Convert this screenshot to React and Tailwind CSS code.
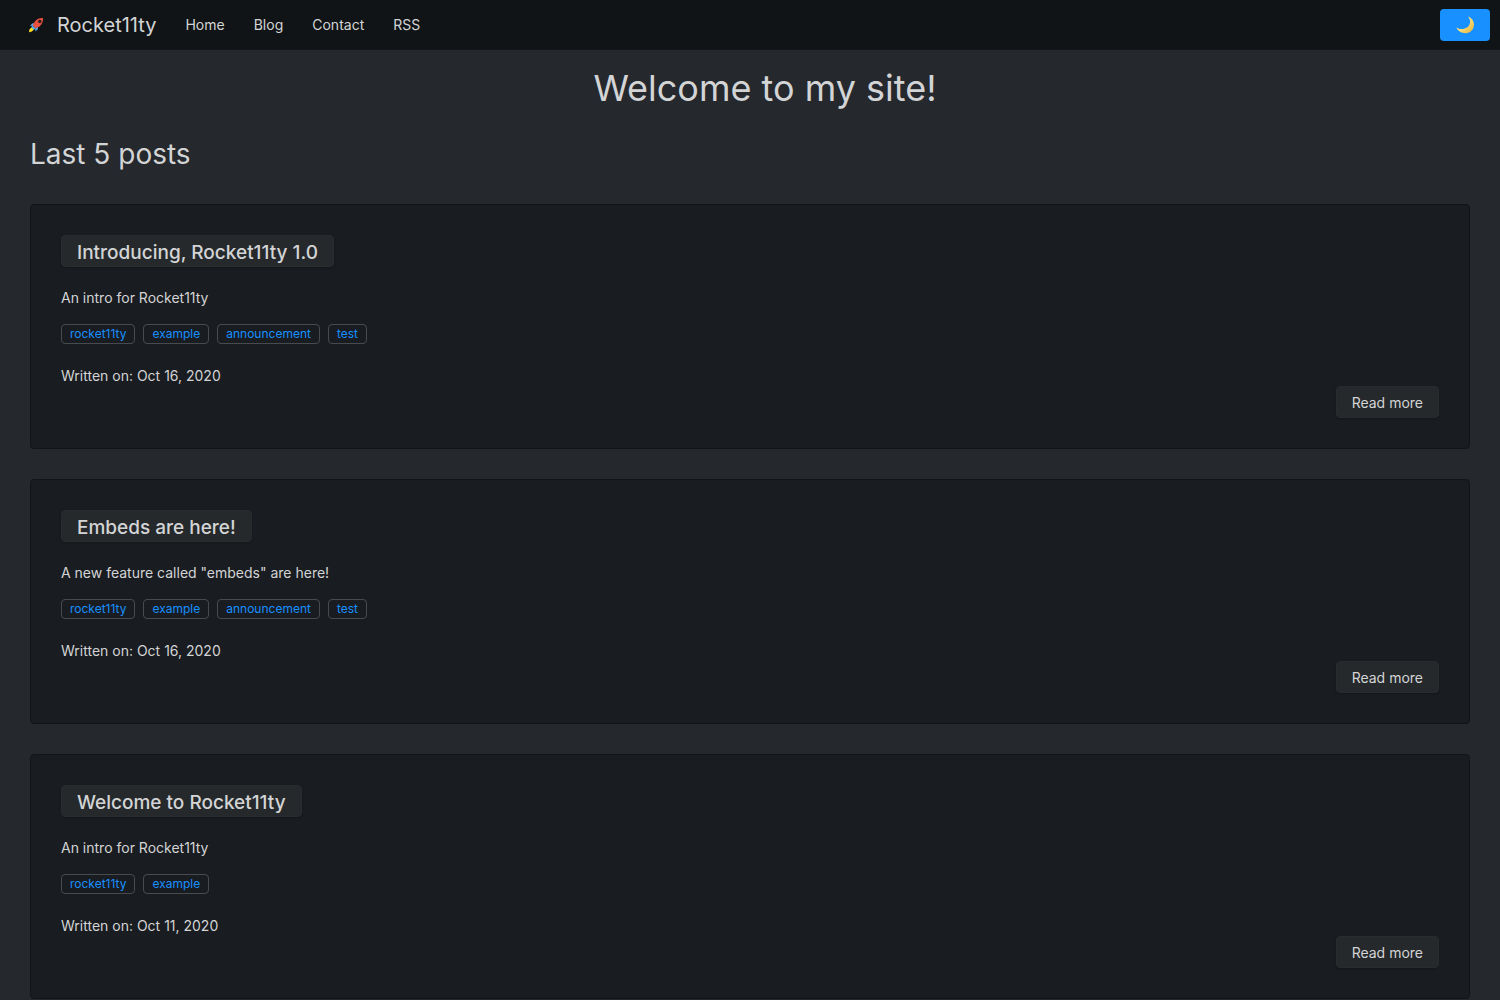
const navLinks = ['Home', 'Blog', 'Contact', 'RSS'];

const posts = [
  {
    title: 'Introducing, Rocket11ty 1.0',
    text: 'An intro for Rocket11ty',
    tags: ['rocket11ty', 'example', 'announcement', 'test'],
    date: 'Oct 16, 2020',
  },
  {
    title: 'Embeds are here!',
    text: 'A new feature called "embeds" are here!',
    tags: ['rocket11ty', 'example', 'announcement', 'test'],
    date: 'Oct 16, 2020',
  },
  {
    title: 'Welcome to Rocket11ty',
    text: 'An intro for Rocket11ty',
    tags: ['rocket11ty', 'example'],
    date: 'Oct 11, 2020',
  },
];

function Rocket() {
  return (
    <svg viewBox="0 0 16 16" className="size-4" aria-hidden="true">
      <path d="M6.6 6 4.2 6.6 2 9l3.2-.2zM10 9.4 9.8 12.2 7.4 14.6 7.2 11.2z" fill="#55acee" />
      <path d="M3.6 10.2 1.4 12.4 1 15.2l2.8-.6 2.2-2.1z" fill="#ffe21c" />
      <path d="M15 1c-3.2-.2-6.2.8-8.2 3.4L4.6 8.6l2.9 2.9 4.2-2.3C14.2 7.2 15.2 4.2 15 1z" fill="#e8503f" />
      <path d="m4.6 8.6-1.3 1.6 2.6 2.6 1.6-1.3z" fill="#55acee" />
      <circle cx="11.8" cy="4.4" r="1.7" fill="#24201f" />
    </svg>
  );
}

function Moon() {
  return (
    <svg viewBox="0 0 20 20" className="size-5" aria-hidden="true">
      <defs>
        <linearGradient id="moon" x1="0" y1="0" x2="1" y2="1">
          <stop offset="0.4" stopColor="#ffe680" />
          <stop offset="1" stopColor="#dfb03a" />
        </linearGradient>
      </defs>
      <path
        d="M13.2 1.4c4.6 2 6.8 6.3 5.4 10.8-1.4 4.4-5.6 6.5-9.7 5.9-3.5-.6-6.4-2.8-7.6-5.9 2.4 1.9 5.4 2.4 8.4 1.4 5.4-1.8 7.2-7.2 3.5-12.2z"
        fill="url(#moon)"
      />
    </svg>
  );
}

const raised = 'rounded border border-[#282c2e] bg-[#25292b] px-[15px] shadow-[0_1px_2px_rgba(0,0,0,0.2)]';

function Post({ post }) {
  return (
    <article className="rounded border border-[#121517] bg-[#191c20] p-[30px]">
      <h3 className="flex">
        <a href="#" className={`flex h-8 items-center pt-0.5 text-[19px] font-medium ${raised}`}>
          {post.title}
        </a>
      </h3>
      <p className="mt-5">{post.text}</p>
      <div className="mt-4 flex flex-wrap gap-2">
        {post.tags.map((tag) => (
          <a
            key={tag}
            href="#"
            className="flex h-5 items-center rounded border border-[#484b4e] px-2 text-xs text-[#1890ff]"
          >
            {tag}
          </a>
        ))}
      </div>
      <p className="mt-[21px]">Written on: {post.date}</p>
      <div className="flex justify-end">
        <a href="#" className={`flex h-8 items-center ${raised}`}>
          Read more
        </a>
      </div>
    </article>
  );
}

export default function App() {
  return (
    <div className="min-h-screen bg-[#25282d] font-['Inter',sans-serif] text-sm leading-[21px] text-[#d3d4d5]">
      <header className="flex h-[50px] items-center border-b border-[#15181a] bg-[#111417] pr-2.5 pl-7">
        <a href="#" className="flex items-center gap-[13px] text-xl">
          <Rocket />
          Rocket11ty
        </a>
        <nav className="ml-[29px] flex gap-[29px]">
          {navLinks.map((label) => (
            <a key={label} href="#">
              {label}
            </a>
          ))}
        </nav>
        <button
          type="button"
          aria-label="Toggle dark mode"
          className="ml-auto flex h-8 w-[50px] items-center justify-center rounded bg-[#1890ff]"
        >
          <Moon />
        </button>
      </header>
      <main className="px-[30px] pb-[30px]">
        <h1 className="pt-2 pl-[30px] text-center text-4xl leading-[60px]">Welcome to my site!</h1>
        <h2 className="mt-[14px] text-[28px] leading-[45px]">Last 5 posts</h2>
        <div className="mt-[27px] flex flex-col gap-[30px]">
          {posts.map((post) => (
            <Post key={post.title} post={post} />
          ))}
        </div>
      </main>
    </div>
  );
}
